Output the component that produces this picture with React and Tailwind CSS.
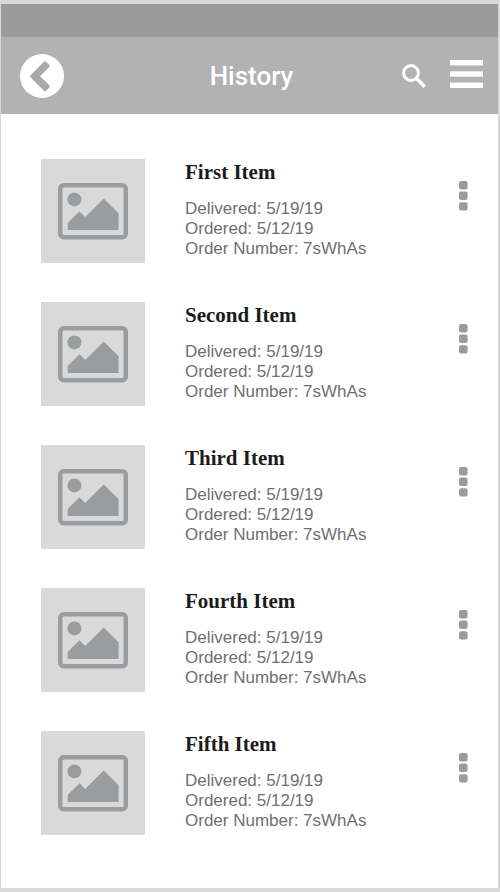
import React from 'react'

const orders = [
  { id: 1, name: 'First Item', delivered: '5/19/19', ordered: '5/12/19', number: '7sWhAs' },
  { id: 2, name: 'Second Item', delivered: '5/19/19', ordered: '5/12/19', number: '7sWhAs' },
  { id: 3, name: 'Third Item', delivered: '5/19/19', ordered: '5/12/19', number: '7sWhAs' },
  { id: 4, name: 'Fourth Item', delivered: '5/19/19', ordered: '5/12/19', number: '7sWhAs' },
  { id: 5, name: 'Fifth Item', delivered: '5/19/19', ordered: '5/12/19', number: '7sWhAs' },
]

const BackIcon = () => (
  <svg className="size-11" viewBox="0 0 44 44" fill="currentColor" aria-hidden="true">
    <circle cx="22" cy="22" r="22" />
    <path
      className="fill-[#a9a9a9] stroke-[#a9a9a9]"
      strokeWidth="3"
      strokeLinejoin="round"
      d="M11.6 22.2L25 8.8L28.2 12L18 22.2L28.2 32.4L25 35.6Z"
    />
  </svg>
)

const SearchIcon = () => (
  <svg className="size-6" viewBox="0 0 24 24" fill="none" stroke="currentColor" aria-hidden="true">
    <circle cx="9" cy="9" r="7.4" strokeWidth="3" />
    <path d="M14.3 14.3L22.8 22.8" strokeWidth="3.4" />
  </svg>
)

const MenuIcon = () => (
  <svg className="w-[33px] h-7" viewBox="0 0 33 28" fill="currentColor" aria-hidden="true">
    <rect width="33" height="5.4" />
    <rect y="11.3" width="33" height="5.4" />
    <rect y="22.6" width="33" height="5.4" />
  </svg>
)

const DotsIcon = () => (
  <svg className="w-[9px] h-[30px]" viewBox="0 0 9 30" fill="currentColor" aria-hidden="true">
    <rect width="8.6" height="8.4" rx="2" />
    <rect y="10.6" width="8.6" height="8.4" rx="2" />
    <rect y="21.2" width="8.6" height="8.4" rx="2" />
  </svg>
)

const PictureIcon = () => (
  <svg className="w-[70px] h-[57px]" viewBox="0 0 70 57" fill="currentColor" aria-hidden="true">
    <rect x="2.25" y="2.25" width="65.5" height="52" rx="3.5" fill="none" stroke="currentColor" strokeWidth="4.5" />
    <circle cx="16.4" cy="16.4" r="7" />
    <path d="M9.7 47V40L21.5 28.3L27.2 34L45.7 15.4L60.6 30.2V47Z" />
  </svg>
)

const OrderItem = ({ name, delivered, ordered, number }) => (
  <li className="flex items-start">
    <div className="flex items-center justify-center shrink-0 size-[104px] bg-[#d9d9d9] text-[#999d9f]">
      <PictureIcon />
    </div>
    <div className="flex-1 ml-10">
      <h2 className="font-['Liberation_Serif',serif] text-[21px] leading-[26px] font-bold text-[#1c1c1c]">{name}</h2>
      <div className="mt-3.5 text-[17px] leading-5 text-[#6f6f6f]">
        <p>Delivered: {delivered}</p>
        <p>Ordered: {ordered}</p>
        <p>Order Number: {number}</p>
      </div>
    </div>
    <button type="button" aria-label={`Options for ${name}`} className="mt-[22px] text-[#9b9b9b]">
      <DotsIcon />
    </button>
  </li>
)

const App = () => {
  return (
    <div className="flex flex-col min-h-screen bg-[#d8d8d8] pt-1 pr-0.5 pb-1 pl-px font-['Liberation_Sans',sans-serif]">
      {/* Status bar */}
      <div className="h-[33px] bg-[#9b9b9b]" />

      {/* Header */}
      <header className="grid grid-cols-[1fr_auto_1fr] items-center h-[77px] pl-[19px] pr-[15px] bg-[#b2b2b2] text-white">
        <button type="button" aria-label="Back" className="justify-self-start">
          <BackIcon />
        </button>
        <h1 className="font-[Roboto,sans-serif] text-[26px] leading-8 font-medium">History</h1>
        <div className="flex items-center gap-6 justify-self-end">
          <button type="button" aria-label="Search">
            <SearchIcon />
          </button>
          <button type="button" aria-label="Menu" className="pb-1">
            <MenuIcon />
          </button>
        </div>
      </header>

      {/* Order list */}
      <main className="flex-1 bg-white pt-[45px] pr-[30px] pb-12 pl-10">
        <ul className="flex flex-col gap-[39px]">
          {orders.map((order) => (
            <OrderItem key={order.id} {...order} />
          ))}
        </ul>
      </main>
    </div>
  )
}

export default App
